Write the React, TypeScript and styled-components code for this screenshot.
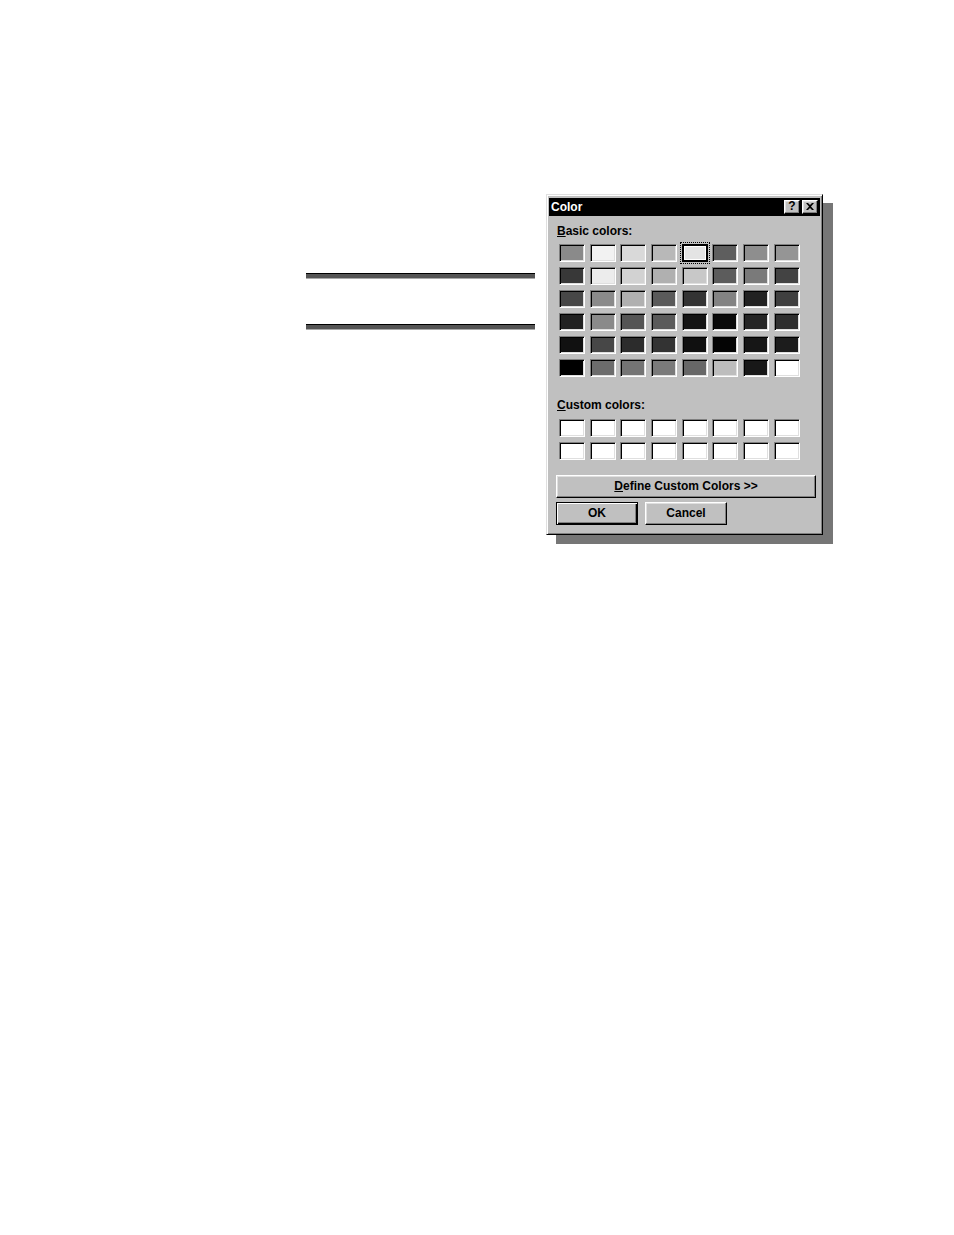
import styled, { createGlobalStyle } from 'styled-components';

const GlobalStyle = createGlobalStyle`
  html, body {
    margin: 0;
    padding: 0;
    background: #ffffff;
  }
  * {
    box-sizing: border-box;
  }
`;

// basic palette, row by row
const basicColors: string[][] = [
  ['#8a8a8a', '#f2f2f2', '#d9d9d9', '#b8b8b8', '#e4e4e4', '#5e5e5e', '#8e8e8e', '#959595'],
  ['#383838', '#ececec', '#d2d2d2', '#b0b0b0', '#c8c8c8', '#5c5c5c', '#7a7a7a', '#434343'],
  ['#474747', '#8a8a8a', '#b0b0b0', '#5a5a5a', '#333333', '#838383', '#222222', '#3f3f3f'],
  ['#222222', '#8a8a8a', '#555555', '#5a5a5a', '#141414', '#0a0a0a', '#252525', '#2e2e2e'],
  ['#111111', '#474747', '#2c2c2c', '#333333', '#101010', '#040404', '#161616', '#1c1c1c'],
  ['#000000', '#6c6c6c', '#747474', '#7a7a7a', '#676767', '#bdbdbd', '#181818', '#ffffff'],
];

const Page = styled.div`
  display: flex;
  align-items: flex-start;
  padding: 194px 0 0 306px;
  min-height: 1235px;
  font-family: 'Liberation Sans', Arial, sans-serif;
`;

const Rules = styled.div`
  width: 229px;
  margin-top: 79px;
  display: flex;
  flex-direction: column;
  gap: 45px;
`;

const Rule = styled.div`
  height: 6px;
  border-top: 1px solid #000000;
  border-bottom: 1px solid #a9a9a9;
  background: #555555;
`;

const Window = styled.div`
  width: 277px;
  height: 341px;
  margin-left: 11px;
  background: #c0c0c0;
  border: 1px solid;
  border-color: #dfdfdf #000000 #000000 #dfdfdf;
  box-shadow: inset 1px 1px 0 #ffffff, inset -1px -1px 0 #808080,
    10px 9px 0 #767676;
  padding: 3px 2px 2px;
  display: flex;
  flex-direction: column;
`;

const TitleBar = styled.div`
  height: 18px;
  background: #000000;
  color: #ffffff;
  display: flex;
  align-items: center;
  padding: 0 2px 1px 2px;
  font-size: 12px;
  font-weight: bold;
  line-height: 14px;
`;

const Title = styled.span`
  flex: 1;
`;

const TitleButton = styled.div`
  width: 16px;
  height: 14px;
  margin-left: 2px;
  background: #c0c0c0;
  color: #000000;
  border: 1px solid;
  border-color: #ffffff #000000 #000000 #ffffff;
  box-shadow: inset -1px -1px 0 #808080, inset 1px 1px 0 #dfdfdf;
  display: flex;
  align-items: center;
  justify-content: center;
  font-size: 12px;
  font-weight: bold;
  line-height: 11px;
`;

const Body = styled.div`
  display: flex;
  flex-direction: column;
  padding: 8px 0 0 7px;
`;

const Label = styled.div<{ gap: number }>`
  margin: ${p => p.gap}px 0 0 1px;
  font-size: 12px;
  font-weight: bold;
  line-height: 14px;
  color: #000000;

  u {
    text-decoration: underline;
    text-underline-offset: 1px;
  }
`;

const SwatchGrid = styled.div<{ gap: number }>`
  margin: ${p => p.gap}px 0 0 3px;
  display: grid;
  grid-template-columns: repeat(8, 26px);
  grid-auto-rows: 18px;
  column-gap: 4.7px;
  row-gap: 5px;
`;

const Swatch = styled.div<{ selected?: boolean }>`
  border: 1px solid;
  border-color: #808080 #ffffff #ffffff #808080;
  box-shadow: inset 1px 1px 0 #000000, inset -1px -1px 0 #dfdfdf;
  ${p =>
    p.selected &&
    `
      border-color: #000000;
      box-shadow: inset 1px 1px 0 #000000, inset -1px -1px 0 #000000,
        inset 2px 2px 0 #ffffff, inset -2px -2px 0 #ffffff;
      outline: 1px dotted #000000;
      outline-offset: 1px;
    `}
`;

const Button = styled.div<{ isDefault?: boolean; width: number }>`
  width: ${p => p.width}px;
  height: 23px;
  padding-bottom: 2px;
  background: #c0c0c0;
  border: 1px solid;
  border-color: #ffffff #000000 #000000 #ffffff;
  box-shadow: inset -1px -1px 0 #808080, inset 1px 1px 0 #dfdfdf;
  display: flex;
  align-items: center;
  justify-content: center;
  font-size: 12px;
  font-weight: bold;
  color: #000000;
  ${p =>
    p.isDefault &&
    `
      border-color: #000000;
      box-shadow: inset 1px 1px 0 #ffffff, inset -1px -1px 0 #000000,
        inset -2px -2px 0 #808080;
    `}

  u {
    text-decoration: underline;
    text-underline-offset: 1px;
  }
`;

const DefineButton = styled(Button)`
  margin: 15px 0 0 0;
`;

const ButtonRow = styled.div`
  display: flex;
  gap: 7px;
  margin-top: 4px;
`;

const CloseGlyph = () => (
  <svg width="8" height="7" viewBox="0 0 8 7">
    <path d="M0 0h2l2 2 2-2h2L5 3.5 8 7H6L4 5 2 7H0l3-3.5z" fill="#000" />
  </svg>
);

const App = () => {
  const customColors = Array.from({ length: 16 }, () => '#ffffff');

  return (
    <>
      <GlobalStyle />
      <Page>
        <Rules>
          <Rule />
          <Rule />
        </Rules>
        <Window>
          <TitleBar>
            <Title>Color</Title>
            <TitleButton>?</TitleButton>
            <TitleButton>
              <CloseGlyph />
            </TitleButton>
          </TitleBar>
          <Body>
            <Label gap={0}>
              <u>B</u>asic colors:
            </Label>
            <SwatchGrid gap={6}>
              {basicColors.flat().map((c, i) => (
                <Swatch key={i} selected={i === 4} style={{ background: c }} />
              ))}
            </SwatchGrid>
            <Label gap={21}>
              <u>C</u>ustom colors:
            </Label>
            <SwatchGrid gap={7}>
              {customColors.map((c, i) => (
                <Swatch key={i} style={{ background: c }} />
              ))}
            </SwatchGrid>
            <DefineButton width={260}>
              <span>
                <u>D</u>efine Custom Colors &gt;&gt;
              </span>
            </DefineButton>
            <ButtonRow>
              <Button isDefault width={82}>
                OK
              </Button>
              <Button width={82}>Cancel</Button>
            </ButtonRow>
          </Body>
        </Window>
      </Page>
    </>
  );
};

export default App;
